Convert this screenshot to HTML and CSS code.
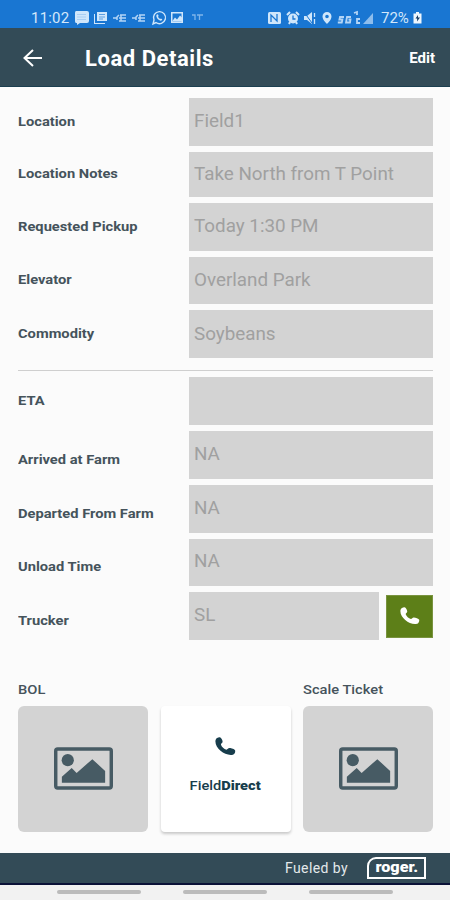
FILE: index.html
```html
<!DOCTYPE html>
<html lang="en">
<head>
  <meta charset="UTF-8">
  <meta name="viewport" content="width=device-width, initial-scale=1">
  <title>Load Details</title>
  <link rel="stylesheet" href="styles.css">
</head>
<body>
  <div class="statusbar">
    <span class="clock">11:02</span>
    <svg class="status-left" width="132" height="16" viewBox="0 0 132 16" fill="#cfe6fb">
      <path d="M2 1h11a2 2 0 0 1 2 2v8a2 2 0 0 1-2 2H6l-3 2v-2H2a2 2 0 0 1-1-2V3a2 2 0 0 1 1-2z"/>
      <path d="M3 4.500h9M3 7h9M3 9.500h9" stroke="#a9cef3" stroke-width="1"/>
      <path d="M23 2h10v9H23zM21 4v9h10v1H20V4z"/>
      <path d="M25 4.500h6M25 7h6M25 9h4" stroke="#5c9fe2" stroke-width="1"/>
      <g fill="none" stroke="#b4d5f6" stroke-width="1.500">
        <path d="M39 8h4M43 10V7l2-2M46 5h6M45 8h7M45 11h7M47 5v6"/>
        <path d="M58 8h4M62 10V7l2-2M65 5h6M64 8h7M64 11h7M66 5v6"/>
      </g>
      <path d="M79 14l1-4a6 6 0 1 1 2 2.500z" fill="none" stroke="#cfe6fb" stroke-width="1.400"/>
      <path d="M82.500 5c1-1.500 2 0 2 1l-.5 1 2 2 1-.5c1 .5 2 1 .5 2-2 1-6-3-5-5.500z"/>
      <path d="M97 2h12v11H97zM98.500 3.500v8h9v-8z" fill-rule="evenodd"/>
      <path d="M98 11.500l3-4 2 2 3-4 2 2v4z"/>
      <path d="M118 5h3v5M123 5h6M125.500 5v5" fill="none" stroke="#7fb5ea" stroke-width="1.300"/>
    </svg>
    <svg class="status-right" width="106" height="16" viewBox="0 0 106 16" fill="#cfe6fb">
      <rect x="0" y="2" width="13" height="12" rx="1.500"/>
      <path d="M3 12V5l6 6V4" fill="none" stroke="#1976d2" stroke-width="1.300"/>
      <circle cx="25" cy="8.500" r="5"/>
      <path d="M19 5l3-3M31 5l-3-3M21 14l1-2M29 14l-1-2" stroke="#cfe6fb" stroke-width="2"/>
      <path d="M25 5.500v3.500h2.500" fill="none" stroke="#1976d2" stroke-width="1.300"/>
      <path d="M36 6h3l5-4v12l-5-4h-3z"/>
      <path d="M46.500 3v4M46.500 9v5" stroke="#cfe6fb" stroke-width="1.300"/>
      <path d="M36 2l8 11" stroke="#1976d2"/>
      <path fill-rule="evenodd" d="M59 2a4.500 4.500 0 0 1 4.500 4.500C63.500 10 59 14 59 14s-4.500-4-4.500-7.500A4.500 4.500 0 0 1 59 2zm0 2.700a1.800 1.800 0 1 0 0 3.600 1.800 1.800 0 0 0 0-3.600z"/>
      <path d="M76 7h-4l-.6 2.500h3l-.6 3h-4M83 7h-4l-1 5.500h4l.5-3h-2M86 3l3-1v3M92 9h-3v4h3" fill="none" stroke="#b4d5f6" stroke-width="1.800"/>
      <path d="M105 3v11H95z" fill="#8ebdec"/>
    </svg>
    <span class="percent">72%</span>
    <svg class="battery" width="9" height="13" viewBox="0 0 9 13">
      <path d="M3 1h3v1.500h2.500v10h-8v-10H3z" fill="#eef6fd"/>
      <path d="M5 4L2.500 7.500h1.700L4 10.500l3-4H5z" fill="#173c66"/>
    </svg>
  </div>

  <header class="topbar">
    <svg class="back" width="20" height="18" viewBox="0 0 20 18" fill="none" stroke="#fff" stroke-width="2">
      <path d="M10 1L1.500 9l8.500 8M1.500 9H19"/>
    </svg>
    <h1 class="title">Load Details</h1>
    <a class="edit">Edit</a>
  </header>

  <main class="content">
    <section class="fields">
      <div class="row"><label class="label">Location</label><div class="field"><span>Field1</span></div></div>
      <div class="row short"><label class="label">Location Notes</label><div class="field"><span>Take North from T Point</span></div></div>
      <div class="row"><label class="label">Requested Pickup</label><div class="field"><span>Today 1:30 PM</span></div></div>
      <div class="row"><label class="label">Elevator</label><div class="field"><span>Overland Park</span></div></div>
      <div class="row"><label class="label">Commodity</label><div class="field"><span>Soybeans</span></div></div>
    </section>

    <section class="fields times">
      <div class="row"><label class="label">ETA</label><div class="field"></div></div>
      <div class="row low"><label class="label">Arrived at Farm</label><div class="field"><span>NA</span></div></div>
      <div class="row low"><label class="label">Departed From Farm</label><div class="field"><span>NA</span></div></div>
      <div class="row low"><label class="label">Unload Time</label><div class="field"><span>NA</span></div></div>
      <div class="row low">
        <label class="label">Trucker</label>
        <div class="field"><span>SL</span></div>
        <button class="call" aria-label="Call trucker">
          <svg width="20" height="18" viewBox="0 0 20 18" fill="#fff">
            <path d="M.5 3C1 1 3 .2 4.500.3 6 .6 7.500 3.500 7.200 4.800 7 6 5.600 6.200 5.700 7.300c.8 2.200 2.800 4 5.200 4.700 1.200 0 1.500-1.300 2.800-1.500 1.500-.1 5 .9 5.500 2.300.3 1.700-.7 3.500-2.200 4C10 18.500-.8 10.500.5 3z"/>
          </svg>
        </button>
      </div>
    </section>

    <section class="tickets">
      <div class="ticket">
        <span class="caption">BOL</span>
        <div class="tile">
          <svg width="59" height="43" viewBox="0 0 60 43" fill="#475b64">
            <rect x="1.750" y="1.750" width="56.500" height="39.500" rx="2" fill="none" stroke="#475b64" stroke-width="3.500"/>
            <circle cx="14" cy="13" r="6.200"/>
            <path d="M8 36v-6l10-9 5 5 16-14 13 12v12z"/>
          </svg>
        </div>
      </div>
      <div class="ticket">
        <div class="tile direct">
          <svg width="21" height="19" viewBox="0 0 20 18" fill="#173d4c">
            <path d="M.5 3C1 1 3 .2 4.500.3 6 .6 7.500 3.500 7.200 4.800 7 6 5.600 6.200 5.700 7.300c.8 2.200 2.800 4 5.200 4.700 1.200 0 1.500-1.300 2.800-1.500 1.500-.1 5 .9 5.500 2.300.3 1.700-.7 3.500-2.200 4C10 18.500-.8 10.500.5 3z"/>
          </svg>
          <span class="direct-name">Field<b>Direct</b></span>
        </div>
      </div>
      <div class="ticket">
        <span class="caption">Scale Ticket</span>
        <div class="tile">
          <svg width="59" height="43" viewBox="0 0 60 43" fill="#475b64">
            <rect x="1.750" y="1.750" width="56.500" height="39.500" rx="2" fill="none" stroke="#475b64" stroke-width="3.500"/>
            <circle cx="14" cy="13" r="6.200"/>
            <path d="M8 36v-6l10-9 5 5 16-14 13 12v12z"/>
          </svg>
        </div>
      </div>
    </section>
  </main>

  <footer class="footer">
    <span class="fueled">Fueled by</span>
    <span class="roger"><span>roger.</span></span>
  </footer>
  <nav class="navbar"><i></i><i></i><i></i></nav>
</body>
</html>
```
FILE: styles.css
```css
* {
  box-sizing: border-box;
}

body {
  margin: 0;
  width: 450px;
  height: 900px;
  overflow: hidden;
  display: flex;
  flex-direction: column;
  font-family: Roboto, "Liberation Sans", sans-serif;
  background: #fbfbfb;
}

.statusbar {
  height: 28px;
  flex: none;
  display: flex;
  align-items: center;
  padding: 7px 0 0 31px;
  background: #1976d2;
  color: #d3e7fa;
  font-size: 15px;
  line-height: 20px;
}

.clock {
  width: 43px;
  letter-spacing: 0.2px;
}

.status-right {
  margin-left: 62px;
}

.percent {
  width: 31px;
  margin-left: 7px;
}

.battery {
  margin-left: 1px;
}

.topbar {
  height: 59px;
  flex: none;
  display: flex;
  align-items: center;
  padding: 2px 15px 0 23px;
  background: #334b57;
  border-bottom: 1px solid #1c3f50;
  color: #fff;
}

.title {
  margin: 0 0 0 42px;
  font-size: 22px;
  font-weight: 700;
  letter-spacing: 0.55px;
}

.edit {
  margin-left: auto;
  font-size: 14px;
  font-weight: 700;
  transform: scaleX(1.07);
  transform-origin: right;
}

.content {
  height: 766px;
  flex: none;
  padding: 11px 17px 0 18px;
}

.fields {
  display: flex;
  flex-direction: column;
  gap: 6px;
  padding-bottom: 12px;
}

.times {
  border-top: 1px solid #cfcfcf;
  padding-top: 6px;
}

.row {
  height: 47.800px;
  display: flex;
  align-items: center;
}

.short {
  height: 45px;
}

.label {
  width: 171px;
  flex: none;
  padding-bottom: 1px;
  font-size: 13px;
  font-weight: 700;
  color: #45535b;
  transform: scaleX(1.13);
  transform-origin: left;
}

.low .label {
  padding: 9px 0 0;
}

.field {
  flex: 1;
  align-self: stretch;
  display: flex;
  align-items: center;
  padding: 0 0 2px 5px;
  background: #d3d3d3;
  color: #a0a0a0;
  font-size: 18px;
}

.field span {
  white-space: nowrap;
  transform: scaleX(1.045);
  transform-origin: left;
}

.low .field {
  padding-bottom: 3px;
}

.call {
  width: 47px;
  height: 43px;
  margin-left: 7px;
  padding: 0;
  display: flex;
  align-items: center;
  justify-content: center;
  border: 1px solid #79933f;
  background: #5d7f18;
}

.tickets {
  display: grid;
  grid-template-columns: repeat(3, 130px);
  column-gap: 12.500px;
  margin-top: 29px;
}

.ticket {
  display: flex;
  flex-direction: column;
  justify-content: flex-end;
}

.caption {
  height: 25px;
  font-size: 13px;
  font-weight: 500;
  line-height: 17px;
  color: #46535b;
  transform: scaleX(1.13);
  transform-origin: left;
}

.tile {
  height: 126px;
  display: flex;
  align-items: center;
  justify-content: center;
  padding-bottom: 1px;
  border-radius: 6px;
  background: #d3d3d3;
}

.direct {
  flex-direction: column;
  gap: 23px;
  padding-bottom: 8px;
  background: #fff;
  border-radius: 4px;
  box-shadow: 0 2px 3px rgba(0, 0, 0, 0.2);
}

.direct-name {
  font-size: 12px;
  line-height: 14px;
  font-weight: 500;
  color: #173d4c;
  transform: scaleX(1.22);
}

.direct-name b {
  font-weight: 900;
}

.footer {
  height: 32px;
  flex: none;
  display: flex;
  align-items: center;
  padding-left: 285px;
  background: #334b57;
  border-bottom: 2px solid #0b1238;
  color: #e4e9eb;
}

.fueled {
  width: 82px;
  font-size: 14px;
  letter-spacing: 0.4px;
}

.roger {
  width: 59px;
  height: 22px;
  display: flex;
  align-items: center;
  justify-content: center;
  border: 2px solid #fff;
  border-top-left-radius: 9px;
  color: #fff;
  font-size: 15px;
  font-weight: 900;
  line-height: 16px;
}

.roger span {
  padding-bottom: 2px;
  transform: scaleX(1.08);
}

.navbar {
  flex: 1;
  display: flex;
  justify-content: center;
  gap: 42px;
  padding-top: 5px;
  background: #f2f2f2;
}

.navbar i {
  width: 84px;
  height: 4px;
  border-radius: 2px;
  background: #bbb;
}
```
